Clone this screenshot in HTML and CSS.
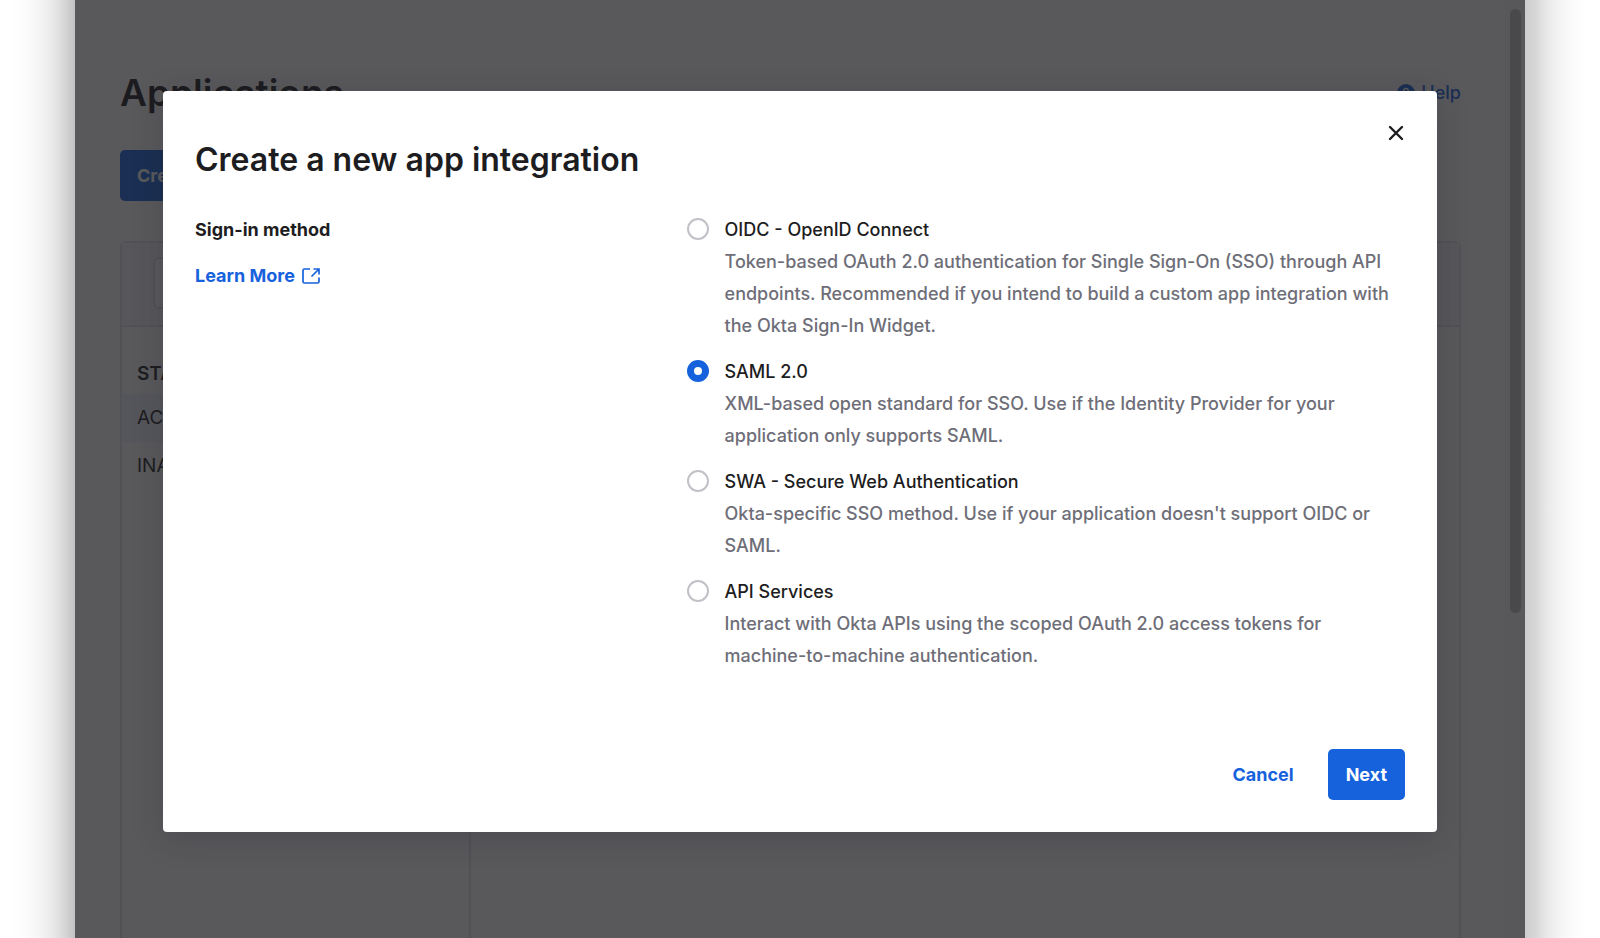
FILE: index.html
```html
<!DOCTYPE html>
<html lang="en">
<head>
<meta charset="utf-8">
<meta name="viewport" content="width=device-width, initial-scale=1">
<title>Create a new app integration</title>
<link rel="stylesheet" href="styles.css">
</head>
<body>
<div class="stage">
  <div class="gutter gutter-left"></div>
  <div class="window">
    <main class="page">
      <header class="page-head">
        <h1 class="page-title">Applications</h1>
        <a class="help" href="#">
          <svg width="18" height="18" viewBox="0 0 18 18" aria-hidden="true"><circle cx="9" cy="9" r="9" fill="#1662dd"/><path d="M6.6 7a2.4 2.4 0 1 1 3.3 2.2c-.6.3-.9.6-.9 1.3M9 12.4v1.4" fill="none" stroke="#fff" stroke-width="1.5"/></svg>
          <span>Help</span>
        </a>
      </header>
      <button class="btn btn-primary btn-create" type="button">Create App Integration</button>
      <section class="card">
        <div class="card-head"><input class="search" type="text" aria-label="Search applications"></div>
        <div class="card-body">
          <nav class="filters">
            <h2 class="filters-title">STATUS</h2>
            <a class="filter filter-active" href="#">ACTIVE</a>
            <a class="filter" href="#">INACTIVE</a>
          </nav>
          <div class="list"></div>
        </div>
      </section>
    </main>
    <div class="scroll-track"><div class="scroll-thumb"></div></div>
    <div class="overlay">
      <form class="modal" role="dialog" aria-labelledby="modal-title">
        <button class="close" type="button" aria-label="Close">
          <svg width="16" height="16" viewBox="0 0 16 16" aria-hidden="true"><path d="M2 2l12 12M14 2L2 14" stroke="#1d1d21" stroke-width="2.4" stroke-linecap="round"/></svg>
        </button>
        <h2 class="modal-title" id="modal-title">Create a new app integration</h2>
        <div class="modal-body">
          <div class="intro">
            <h3 class="intro-title" id="method">Sign-in method</h3>
            <a class="learn" href="#">Learn More
              <svg width="18" height="16" viewBox="0 0 18 16" aria-hidden="true"><path d="M8 1H2.500A1.500 1.500 0 0 0 1 2.500V13.500A1.500 1.500 0 0 0 2.500 15H15.500A1.500 1.500 0 0 0 17 13.500V9.500M11.500 1H17v5.500M16.500 1.500L9.500 8.500" fill="none" stroke="#1662dd" stroke-width="1.7"/></svg>
            </a>
          </div>
          <div class="options" role="radiogroup" aria-labelledby="method">
            <div class="option">
              <input class="radio" type="radio" name="m" id="oidc">
              <div class="option-text">
                <label for="oidc">OIDC - OpenID Connect</label>
                <p>Token-based OAuth 2.0 authentication for Single Sign-On (SSO) through API endpoints. Recommended if you intend to build a custom app integration with the Okta Sign-In Widget.</p>
              </div>
            </div>
            <div class="option">
              <input class="radio" type="radio" name="m" id="saml" checked>
              <div class="option-text">
                <label for="saml">SAML 2.0</label>
                <p>XML-based open standard for SSO. Use if the Identity Provider for your application only supports SAML.</p>
              </div>
            </div>
            <div class="option">
              <input class="radio" type="radio" name="m" id="swa">
              <div class="option-text">
                <label for="swa">SWA - Secure Web Authentication</label>
                <p>Okta-specific SSO method. Use if your application doesn't support OIDC or SAML.</p>
              </div>
            </div>
            <div class="option">
              <input class="radio" type="radio" name="m" id="api">
              <div class="option-text">
                <label for="api">API Services</label>
                <p>Interact with Okta APIs using the scoped OAuth 2.0 access tokens for machine-to-machine authentication.</p>
              </div>
            </div>
          </div>
        </div>
        <div class="modal-foot">
          <button class="btn btn-text" type="button">Cancel</button>
          <button class="btn btn-primary" type="submit">Next</button>
        </div>
      </form>
    </div>
  </div>
  <div class="gutter gutter-right"></div>
</div>
</body>
</html>
```
FILE: styles.css
```css
* { box-sizing: border-box; }
body {
  margin: 0;
  background: #fff;
  color: #1d1d21;
  font-family: Inter, "Liberation Sans", sans-serif;
  font-size: 18px;
  line-height: 32px;
}
h1, h2, h3, p { margin: 0; }
a { color: #1662dd; text-decoration: none; }
button, input { font: inherit; }

.stage { display: flex; height: 100vh; overflow: hidden; }
.gutter {
  flex: 0 0 75px;
  background: linear-gradient(to left, #c2c2c2 0, #d6d6d6 10px, #e9e9e9 22px, #f5f5f5 36px, #fcfcfc 50px, #fff 64px);
}
.gutter-right { background: linear-gradient(to right, #cdcdcd 0, #d6d6d6 10px, #e9e9e9 22px, #f5f5f5 36px, #fcfcfc 50px, #fff 64px); }
.window { position: relative; flex: 1; display: flex; overflow: hidden; }

.page { flex: 1; display: flex; flex-direction: column; padding: 69px 44px 0 45px; }
.page-head { display: flex; justify-content: space-between; align-items: center; height: 48px; }
.page-title { font-size: 37px; line-height: 48px; font-weight: 600; }
.help { display: flex; align-items: center; gap: 6px; font-weight: 500; }
.btn {
  height: 51px;
  padding: 0 18px;
  border: 0;
  border-radius: 5px;
  font-weight: 700;
  white-space: nowrap;
}
.btn-primary { background: #1662dd; color: #fff; }
.btn-text { padding: 0; background: none; color: #1662dd; }
.btn-create { align-self: flex-start; margin-top: 33px; padding: 0 17px; }
.card {
  flex: 1;
  display: flex;
  flex-direction: column;
  margin-top: 40px;
  border: 2px solid #e6e6e9;
  border-bottom: 0;
  border-radius: 6px 6px 0 0;
}
.card-head { padding: 14px 31px 16px; background: #f7f7f9; border-bottom: 2px solid #e4e4e8; }
.search { display: block; width: 400px; height: 52px; border: 2px solid #e1e1e6; border-radius: 6px; background: #fff; }
.card-body { flex: 1; display: grid; grid-template-columns: 349px 1fr; }
.filters { border-right: 2px solid #e6e6e9; padding-top: 31px; font-size: 19px; }
.filters-title { padding: 0 15px; margin-bottom: 4px; font-size: 19px; line-height: 32px; font-weight: 600; }
.filter { display: block; padding: 8px 15px; color: #1d1d21; }
.filter-active { background: #f0f2fc; }
.scroll-track { flex: 0 0 20px; padding: 9px 4px 0 5px; background: #fafafa; }
.scroll-thumb { height: 65%; border-radius: 6px; background: #c1c1c1; }

.overlay { position: absolute; inset: 0; padding: 91px 88px 0; background: rgba(29, 29, 33, 0.735); }
.modal {
  position: relative;
  padding: 47px 32px 32px;
  border-radius: 4px;
  background: #fff;
  box-shadow: 0 6px 32px rgba(29, 29, 33, 0.2);
}
.close { position: absolute; top: 30px; right: 29px; display: flex; padding: 4px; border: 0; background: none; }
.modal-title { font-size: 32px; line-height: 44px; font-weight: 600; }
.modal-body { display: grid; grid-template-columns: minmax(0, 13fr) minmax(0, 19fr); margin-top: 32px; }
.intro { display: flex; flex-direction: column; align-items: flex-start; gap: 14px; }
.intro-title { font-size: 18px; line-height: 32px; font-weight: 700; }
.learn { display: flex; align-items: center; gap: 7px; font-weight: 700; }
.options { display: flex; flex-direction: column; gap: 14px; font-weight: 500; }
.option { display: flex; gap: 16px; }
.option-text { flex: 1; }
.option-text label { display: block; }
.option-text p { color: #6e6e78; }
.radio {
  appearance: none;
  flex: none;
  width: 22px;
  height: 22px;
  margin: 4px 0;
  border: 2px solid #c1c1c8;
  border-radius: 50%;
  background: #fff;
}
.radio:checked { border: 7px solid #1662dd; }
.modal-foot { display: flex; justify-content: flex-end; gap: 34px; margin-top: 77px; }
```
